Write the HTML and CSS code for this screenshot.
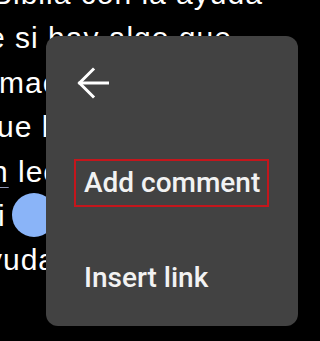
FILE: index.html
```html
<!DOCTYPE html>
<html>
<head>
<meta charset="utf-8">
<link rel="stylesheet" href="styles.css">
</head>
<body>
<div class="stage">
  <div class="doc">
    <div class="line l1">Biblia con la ayuda</div>
    <div class="line l2">e si hay algo que</div>
    <div class="line l3">mación</div>
    <div class="line l4">ue la</div>
    <div class="line l5"><span class="ul">n</span> lectura</div>
    <div class="line l6">i</div>
    <div class="line l7">yuda</div>
  </div>
  <div class="handle"></div>
  <div class="menu">
    <div class="back">
      <svg width="32" height="32" viewBox="0 0 32 32" fill="none" stroke="#ffffff" stroke-width="3" stroke-linecap="square" stroke-linejoin="miter">
        <path d="M16 2.5 L2.5 16 L16 29.5"/>
        <path d="M3 16 H30.5"/>
      </svg>
    </div>
    <div class="item selected">Add comment</div>
    <div class="item">Insert link</div>
  </div>
</div>
</body>
</html>
```
FILE: styles.css
```css
html, body {
  margin: 0;
  padding: 0;
  background: #000;
}
.stage {
  position: relative;
  width: 320px;
  height: 341px;
  overflow: hidden;
  background: #000;
}
.doc {
  margin-top: -28px;
  font-family: "Liberation Sans", Arial, sans-serif;
  font-size: 30px;
  letter-spacing: 1px;
  line-height: 44.4px;
  color: #fff;
}
.line {
  white-space: nowrap;
}
.l1 { margin-left: -8px; }
.l2 { margin-left: -12px; }
.l3 { margin-left: -1px; }
.l4 { margin-left: -3px; }
.l5 { margin-left: -9px; }
.l6 { margin-left: -2px; }
.l7 { margin-left: -13px; }
.ul {
  text-decoration: underline;
  text-decoration-color: #8f96b4;
  text-decoration-thickness: 1px;
  text-underline-offset: 5px;
}
.handle {
  position: absolute;
  left: 12px;
  top: 193px;
  width: 44px;
  height: 44px;
  border-radius: 50%;
  background: #8ab4f8;
}
.menu {
  position: absolute;
  left: 46px;
  top: 36px;
  width: 252px;
  height: 290px;
  box-sizing: border-box;
  background: #424242;
  border-radius: 12px;
  padding: 31px 0 0 28px;
  display: flex;
  flex-direction: column;
  align-items: flex-start;
}
.back {
  margin-left: 3px;
  height: 32px;
  display: flex;
}
.item {
  font-family: Roboto, "Liberation Sans", sans-serif;
  font-weight: 500;
  font-size: 28px;
  line-height: 44px;
  color: #f2f2f2;
  border: 2px solid transparent;
  padding: 0 7px 0 8px;
  white-space: nowrap;
}
.item.selected {
  margin-top: 60px;
  border-color: #c4161c;
}
.item + .item {
  margin-top: 47px;
}
```
